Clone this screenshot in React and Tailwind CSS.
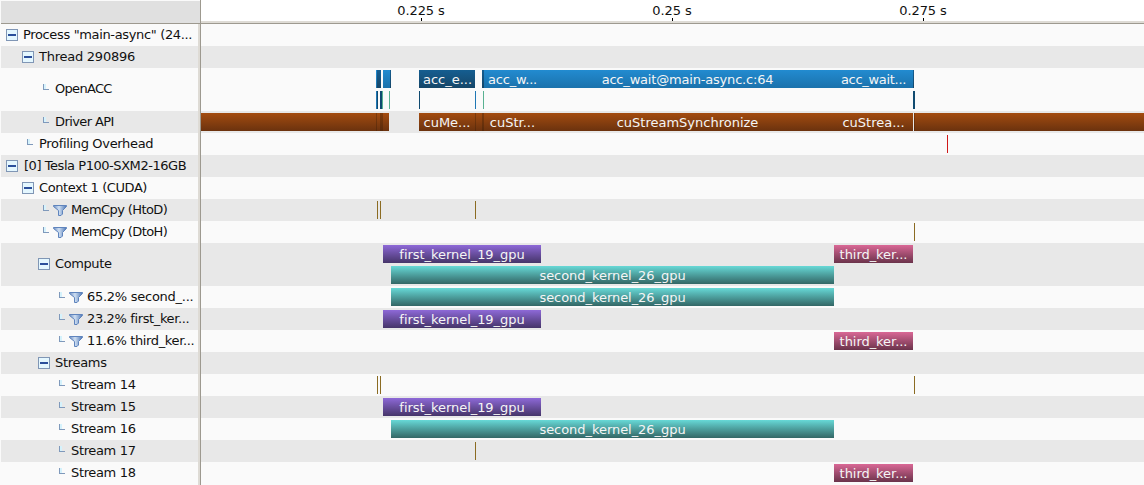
const ACC = 'bg-linear-to-b from-[#228bd0] to-[#1b72ac]';
const ACC_DARK = 'bg-linear-to-b from-[#155e91] to-[#154668]';
const DRIVER = 'bg-linear-to-b from-[#a44c0f] to-[#6b320e]';
const DRIVER_DARK = 'bg-linear-to-b from-[#7f3b0b] to-[#592a0b]';
const FIRST = 'bg-linear-to-b from-[#8e69d8] to-[#46356a]';
const SECOND = 'bg-linear-to-b from-[#67d9d7] to-[#336766]';
const THIRD = 'bg-linear-to-b from-[#da6896] to-[#6b334b]';
const COPY = 'bg-[#8b6b22]';
const NAVY = 'bg-[#104a70]';
const BLUE = 'bg-[#1f77b4]';
const GREEN = 'bg-[#58b191]';

const first = [383, 541, FIRST, 'first_kernel_19_gpu', 'tracking-[-0.05px]'];
const second = [391, 834, SECOND, 'second_kernel_26_gpu', 'tracking-[-0.05px]'];
const third = [834, 913, THIRD, 'third_ker...', 'tracking-[-0.05px]'];

// Each bar is [start, end, fill, label, tracking].
const rows = [
  { label: 'Process "main-async" (24...', track: 'tracking-[-0.35px]', depth: 0, open: true, lanes: [[]] },
  { label: 'Thread 290896', track: 'tracking-[-0.25px]', depth: 1, open: true, lanes: [[]] },
  {
    label: 'OpenACC', track: 'tracking-[-0.7px]', depth: 2,
    lanes: [
      [
        [376, 377, ACC], [377, 381, ACC_DARK], [383, 390, ACC], [390, 391, ACC_DARK],
        [419, 475, ACC_DARK, 'acc_e...', 'pl-px'], [482, 484, ACC_DARK], [484, 541, ACC, 'acc_w...', 'tracking-[-0.2px]'],
        [541, 834, ACC, 'acc_wait@main-async.c:64', 'tracking-[-0.19px]'],
        [834, 913, ACC, 'acc_wait...', 'tracking-[-0.3px]'], [913, 914, ACC_DARK],
      ],
      [
        [376, 377, BLUE], [377, 378, NAVY], [380, 382, NAVY], [382, 383, GREEN], [389, 390, GREEN],
        [419, 420, NAVY], [475, 476, BLUE], [483, 484, GREEN], [913, 915, NAVY],
      ],
    ],
  },
  {
    label: 'Driver API', track: 'tracking-[-0.6px]', depth: 2,
    lanes: [[
      [201, 376, DRIVER], [376, 377, DRIVER_DARK], [377, 380, DRIVER], [380, 383, DRIVER_DARK], [383, 389, DRIVER],
      [419, 475, DRIVER, 'cuMe...'], [475, 476, DRIVER_DARK], [476, 482, DRIVER], [482, 484, DRIVER_DARK],
      [484, 541, DRIVER, 'cuStr...'], [541, 834, DRIVER, 'cuStreamSynchronize'], [834, 913, DRIVER, 'cuStrea...'],
      [914, 915, DRIVER_DARK], [915, 1144, DRIVER],
    ]],
  },
  { label: 'Profiling Overhead', track: 'tracking-[-0.33px]', depth: 1, lanes: [[[947, 948, 'bg-[#d01818]']]] },
  { label: '[0] Tesla P100-SXM2-16GB', track: 'pl-px tracking-[-0.45px]', depth: 0, open: true, lanes: [[]] },
  { label: 'Context 1 (CUDA)', track: 'tracking-[-0.43px]', depth: 1, open: true, lanes: [[]] },
  { label: 'MemCpy (HtoD)', track: 'tracking-[-0.6px]', depth: 2, filter: true, lanes: [[[377, 378, COPY], [380, 381, COPY], [475, 476, COPY]]] },
  { label: 'MemCpy (DtoH)', track: 'tracking-[-0.6px]', depth: 2, filter: true, lanes: [[[914, 915, COPY]]] },
  { label: 'Compute', track: 'tracking-[-0.4px]', depth: 2, open: true, lanes: [[first, third], [second]] },
  { label: '65.2% second_...', track: 'tracking-[-0.27px]', depth: 3, filter: true, lanes: [[second]] },
  { label: '23.2% first_ker...', track: 'tracking-[-0.37px]', depth: 3, filter: true, lanes: [[first]] },
  { label: '11.6% third_ker...', track: 'tracking-[-0.37px]', depth: 3, filter: true, lanes: [[third]] },
  { label: 'Streams', track: 'tracking-[-0.3px]', depth: 2, open: true, lanes: [[]] },
  { label: 'Stream 14', track: 'tracking-[-0.35px]', depth: 3, lanes: [[[377, 378, COPY], [380, 381, COPY], [914, 915, COPY]]] },
  { label: 'Stream 15', track: 'tracking-[-0.35px]', depth: 3, lanes: [[first]] },
  { label: 'Stream 16', track: 'tracking-[-0.35px]', depth: 3, lanes: [[second]] },
  { label: 'Stream 17', track: 'tracking-[-0.35px]', depth: 3, lanes: [[[475, 476, COPY]]] },
  { label: 'Stream 18', track: 'tracking-[-0.35px]', depth: 3, lanes: [[third]] },
];

const indents = ['pl-[5px]', 'pl-[21px]', 'pl-[37px]', 'pl-[53px]'];

function Minus() {
  return (
    <span className="flex size-3 shrink-0 items-center justify-center border border-[#8096b5] bg-[#e4f7ff]">
      <span className="h-0.5 w-2 bg-[#2b4f9b]" />
    </span>
  );
}

function Elbow() {
  return (
    <span className="ml-[5px] mb-1 flex h-[6px] w-[6px] shrink-0 border-b border-l border-[#7f99bb]">
      <span className="h-full w-0.5 bg-[#d5f2fc]" />
    </span>
  );
}

function Funnel() {
  return (
    <svg className="ml-1 mt-px h-[11px] w-[14px] shrink-0" viewBox="0 0 14 11">
      <defs>
        <linearGradient id="funnel" x1="0" x2="1">
          <stop offset="0" stopColor="#6f91c6" />
          <stop offset=".42" stopColor="#cfdff2" />
          <stop offset="1" stopColor="#4a74b4" />
        </linearGradient>
      </defs>
      <path d="M.5.5h13v1L9.5 5.500V9L8 10.500H5.500V5.500L.5 1.500z" fill="url(#funnel)" stroke="#5f84bd" />
    </svg>
  );
}

function Label({ row }) {
  return (
    <div
      className={`flex w-[197px] shrink-0 items-center overflow-hidden whitespace-pre ${indents[row.depth]} ${row.lanes.length === 2 ? 'pb-px' : ''}`}
    >
      {row.open ? <Minus /> : <Elbow />}
      {row.filter && <Funnel />}
      <span className={`leading-4 ${row.filter ? 'ml-1' : row.open ? 'ml-[5px]' : 'ml-1.5'} ${row.track}`}>{row.label}</span>
    </div>
  );
}

function Lane({ bars }) {
  return (
    <div className="flex h-[18px] overflow-hidden">
      {bars.map(([start, end, fill, text, track = ''], i) => (
        <div
          key={start}
          className={`flex h-full shrink-0 items-center justify-center whitespace-nowrap text-[#f5f5f5] ${fill}`}
          style={{ width: end - start, marginLeft: start - (i ? bars[i - 1][1] : 201) }}
        >
          {text && <span className={`pt-0.5 leading-4 ${track}`}>{text}</span>}
        </div>
      ))}
    </div>
  );
}

function Tick({ text }) {
  return (
    <div className="flex w-[60px] flex-col items-center">
      <span className="h-[18px] leading-[22px] tracking-[-0.1px]">{text}</span>
      <span className="h-[3px] w-px bg-black" />
    </div>
  );
}

export default function App() {
  return (
    <div className="flex h-[485px] w-[1144px] flex-col overflow-hidden bg-[#fafafa] pl-px font-['DejaVu_Sans',sans-serif] text-[13px] text-[#111]">
      <div className="flex h-6 shrink-0">
        <div className="mt-px h-[23px] w-[199px] border-b border-[#9d998f] bg-[#e0e0e0]" />
        <div className="w-px bg-[#9d998f]" />
        <div className="flex h-6 grow flex-col border-b border-[#9d998f] bg-white">
          <div className="flex h-[21px] gap-[191px] pl-[190px]">
            <Tick text="0.225 s" />
            <Tick text="0.25 s" />
            <Tick text="0.275 s" />
          </div>
          <div className="h-0.5 bg-[#dedbd5]" />
        </div>
      </div>
      {rows.map((row, i) => (
        <div
          key={row.label}
          className={`flex shrink-0 ${row.lanes.length === 2 ? 'h-[43px]' : 'h-[22px]'} ${i % 2 ? 'bg-[#e8e8e8]' : 'bg-[#fafafa]'}`}
        >
          <Label row={row} />
          <div className="w-0.5 shrink-0 bg-[#dedbd5]" />
          <div className="w-px shrink-0 bg-[#9d998f]" />
          <div className="flex grow flex-col gap-[3px] pt-0.5">
            {row.lanes.map((bars, n) => <Lane key={n} bars={bars} />)}
          </div>
        </div>
      ))}
      <div className="flex h-px shrink-0">
        <div className="w-[197px]" />
        <div className="w-0.5 bg-[#dedbd5]" />
        <div className="w-px bg-[#9d998f]" />
      </div>
    </div>
  );
}
